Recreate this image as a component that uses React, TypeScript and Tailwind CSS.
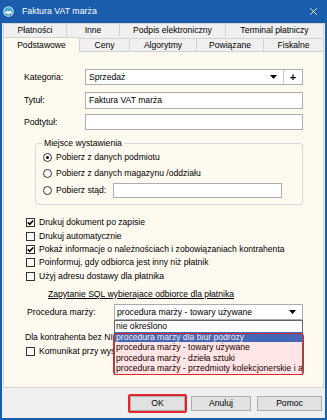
import React from "react";

function Check({ checked }: { checked?: boolean }) {
  return (
    <span className="w-[9px] h-[9px] border border-[#333] bg-white flex items-center justify-center shrink-0">
      {checked && (
        <svg width="7" height="7" viewBox="0 0 7 7">
          <path d="M0.8 3.4 L2.7 5.3 L6.2 1.4" stroke="#000" strokeWidth="1.5" fill="none" />
        </svg>
      )}
    </span>
  );
}

function Radio({ checked }: { checked?: boolean }) {
  return (
    <span className="w-[9px] h-[9px] rounded-full border border-[#333] bg-white flex items-center justify-center shrink-0">
      {checked && <span className="w-[3px] h-[3px] rounded-full bg-[#000]" />}
    </span>
  );
}

function Arrow() {
  return (
    <svg width="7" height="4" viewBox="0 0 7 4" className="shrink-0">
      <path d="M0 0 H7 L3.5 4 Z" fill="#000" />
    </svg>
  );
}

function BackTab({ w, children, last }: { w: string; children: React.ReactNode; last?: boolean }) {
  return (
    <div
      className={
        "h-full flex items-center justify-center border-t border-l border-[#d3d3d3] bg-[#f0f0f0] text-[8.6px] text-[#000] " +
        w +
        (last ? " border-r" : "")
      }
    >
      {children}
    </div>
  );
}

function FrontTab({ w, children }: { w: string; children: React.ReactNode }) {
  return (
    <div
      className={
        "h-[14px] flex items-center justify-center border-t border-r border-b border-[#d3d3d3] bg-[#f0f0f0] text-[8.6px] text-[#000] " +
        w
      }
    >
      {children}
    </div>
  );
}

const items = [
  "nie określono",
  "procedura marży dla biur podróży",
  "procedura marży - towary używane",
  "procedura marży - dzieła sztuki",
  "procedura marży - przedmioty kolekcjonerskie i antyki",
];

export default function App() {
  return (
    <div className="w-[327px] h-[420px] bg-[#1b5dad] flex flex-col overflow-hidden font-['Liberation_Sans',Arial,sans-serif]">
      {/* title bar */}
      <div className="h-[23px] flex items-center pl-[3px] pr-[10px] shrink-0">
        <svg width="11" height="11" viewBox="0 0 11 11" className="shrink-0">
          <circle cx="5.5" cy="5.5" r="5.3" fill="#bfe3f7" />
          <circle cx="5.5" cy="5.5" r="4.3" fill="#4fa6dc" />
          <path d="M2.2 7.2 L3 5.2 H8 L8.8 7.2 Z" fill="#ffffff" />
          <rect x="2.2" y="7.2" width="6.6" height="1.2" fill="#e8eef4" />
          <circle cx="3.5" cy="8.6" r="0.8" fill="#2d4a66" />
          <circle cx="7.5" cy="8.6" r="0.8" fill="#2d4a66" />
        </svg>
        <span className="ml-[8px] text-[8.8px] text-white leading-none">Faktura VAT marża</span>
        <div className="flex-1" />
        <svg width="7" height="7" viewBox="0 0 7 7">
          <path d="M0.3 0.3 L6.7 6.7 M6.7 0.3 L0.3 6.7" stroke="#ffffff" strokeWidth="0.9" />
        </svg>
      </div>

      {/* client area */}
      <div className="flex-1 mx-[2px] mb-[2px] bg-[#f0f0f0] flex flex-col">
        {/* tab row 1 */}
        <div className="h-[14px] flex ml-[1px] shrink-0">
          <BackTab w="w-[63px]">Płatności</BackTab>
          <BackTab w="w-[53px]">Inne</BackTab>
          <BackTab w="w-[106px]">Podpis elektroniczny</BackTab>
          <BackTab w="w-[99px]" last>
            Terminal płatniczy
          </BackTab>
        </div>
        {/* tab row 2 */}
        <div className="h-[15px] flex items-end ml-[1px] shrink-0">
          <div className="w-[77px] h-[15px] flex items-center justify-center border-t border-l border-r border-[#d3d3d3] bg-[#fffaf0] text-[8.6px] text-[#000]">
            Podstawowe
          </div>
          <FrontTab w="w-[50px]">Ceny</FrontTab>
          <FrontTab w="w-[67px]">Algorytmy</FrontTab>
          <FrontTab w="w-[67px]">Powiązane</FrontTab>
          <FrontTab w="w-[60px]">Fiskalne</FrontTab>
        </div>

        {/* panel */}
        <div className="flex-1 mx-[1px] bg-[#fffaf0] border-l border-r border-b border-[#d3d3d3] flex flex-col pl-[20px] pr-[20px] text-[8.6px] text-[#000] leading-none">
          {/* Kategoria */}
          <div className="mt-[17px] h-[16px] flex items-center">
            <span className="w-[61px]">Kategoria:</span>
            <div className="flex-1 h-full bg-white border border-[#abadb3] flex items-center">
              <span className="flex-1 pl-[3px]">Sprzedaż</span>
              <Arrow />
              <div className="ml-[6px] w-px h-full bg-[#c9c9c9]" />
              <div className="w-[18px] h-full flex items-center justify-center text-[11px] font-bold">+</div>
            </div>
          </div>
          {/* Tytuł */}
          <div className="mt-[7px] h-[17px] flex items-center">
            <span className="w-[61px]">Tytuł:</span>
            <div className="flex-1 h-full bg-white border border-[#abadb3] flex items-center pl-[3px]">
              Faktura VAT marża
            </div>
          </div>
          {/* Podtytuł */}
          <div className="mt-[5px] h-[16px] flex items-center">
            <span className="w-[61px]">Podtytuł:</span>
            <div className="flex-1 h-full bg-white border border-[#abadb3]" />
          </div>

          {/* group box */}
          <div className="relative mt-[13px] ml-[11px] border border-[#d5d8dc] rounded-[3px] pt-[5px] pb-[6px] pl-[7px] pr-[20px]">
            <span className="absolute -top-[5px] left-[6px] px-[2px] bg-[#fffaf0] leading-[9px]">Miejsce wystawienia</span>
            <div className="h-[16px] flex items-center gap-[4px]">
              <Radio checked />
              <span>Pobierz z danych podmiotu</span>
            </div>
            <div className="h-[17px] flex items-center gap-[4px]">
              <Radio />
              <span>Pobierz z danych magazynu /oddziału</span>
            </div>
            <div className="h-[16px] flex items-center">
              <Radio />
              <span className="ml-[4px] w-[57px]">Pobierz stąd:</span>
              <div className="flex-1 h-[15px] bg-white border border-[#abadb3]" />
            </div>
          </div>

          {/* checkboxes */}
          <div className="mt-[11px] h-[13px] flex items-center gap-[4px] ml-[2px]">
            <Check checked />
            <span>Drukuj dokument po zapisie</span>
          </div>
          <div className="h-[14px] flex items-center gap-[4px] ml-[2px]">
            <Check />
            <span>Drukuj automatycznie</span>
          </div>
          <div className="h-[13px] flex items-center gap-[4px] ml-[2px]">
            <Check checked />
            <span>Pokaż informacje o należnościach i zobowiązaniach kontrahenta</span>
          </div>
          <div className="h-[13px] flex items-center gap-[4px] ml-[2px]">
            <Check />
            <span>Poinformuj, gdy odbiorca jest inny niż płatnik</span>
          </div>
          <div className="h-[14px] flex items-center gap-[4px] ml-[2px]">
            <Check />
            <span>Użyj adresu dostawy dla płatnika</span>
          </div>

          {/* link */}
          <div className="mt-[5px] h-[12px] flex items-center pl-[24px]">
            <span className="underline">Zapytanie SQL wybierajace odbiorce dla płatnika</span>
          </div>

          {/* procedura */}
          <div className="mt-[4px] h-[16px] flex items-center">
            <span className="ml-[3px] w-[87px] text-[8.7px]">Procedura marży:</span>
            <div className="relative flex-1 h-full">
              <div className="h-full bg-white border border-[#abadb3] flex items-center pl-[2px] pr-[6px] text-[8.7px]">
                <span className="flex-1">procedura marży - towary używane</span>
                <Arrow />
              </div>
              <div className="absolute z-10 left-0 right-0 top-full bg-white border border-[#646464] overflow-hidden text-[8.6px]">
                {items.map((t, i) => (
                  <div
                    key={t}
                    className={
                      "h-[10.6px] flex items-center pl-[1px] whitespace-nowrap overflow-hidden " +
                      (i === 1 ? "bg-[#2f74c9] text-white" : "text-[#000]")
                    }
                  >
                    {t}
                  </div>
                ))}
              </div>
              <div className="absolute z-20 -left-[1px] -right-[1px] top-[29px] h-[42px] rounded-[3px] border-[1.5px] border-[#e0262d] bg-[#ff0000]/10" />
            </div>
          </div>

          <div className="mt-[11px] h-[12px] w-[88px] ml-[1px] flex items-center overflow-hidden whitespace-nowrap">
            <span>Dla kontrahenta bez NIP</span>
          </div>
          <div className="mt-[1px] h-[14px] w-[87px] ml-[2px] flex items-center gap-[4px] overflow-hidden whitespace-nowrap">
            <Check />
            <span>Komunikat przy wystawianiu</span>
          </div>
        </div>

        {/* bottom bar */}
        <div className="h-[30px] shrink-0 flex items-center justify-end pr-[3px] text-[8.6px] text-[#000]">
          <div className="rounded-[2px] border-2 border-[#e3262d]">
            <div className="w-[55px] h-[15px] border border-[#adadad] bg-[#e1e1e1] flex items-center justify-center">OK</div>
          </div>
          <div className="ml-[4px] w-[60px] h-[15px] border border-[#adadad] bg-[#e1e1e1] flex items-center justify-center">Anuluj</div>
          <div className="ml-[6px] w-[65px] h-[15px] border border-[#adadad] bg-[#e1e1e1] flex items-center justify-center">Pomoc</div>
        </div>
      </div>
    </div>
  );
}
